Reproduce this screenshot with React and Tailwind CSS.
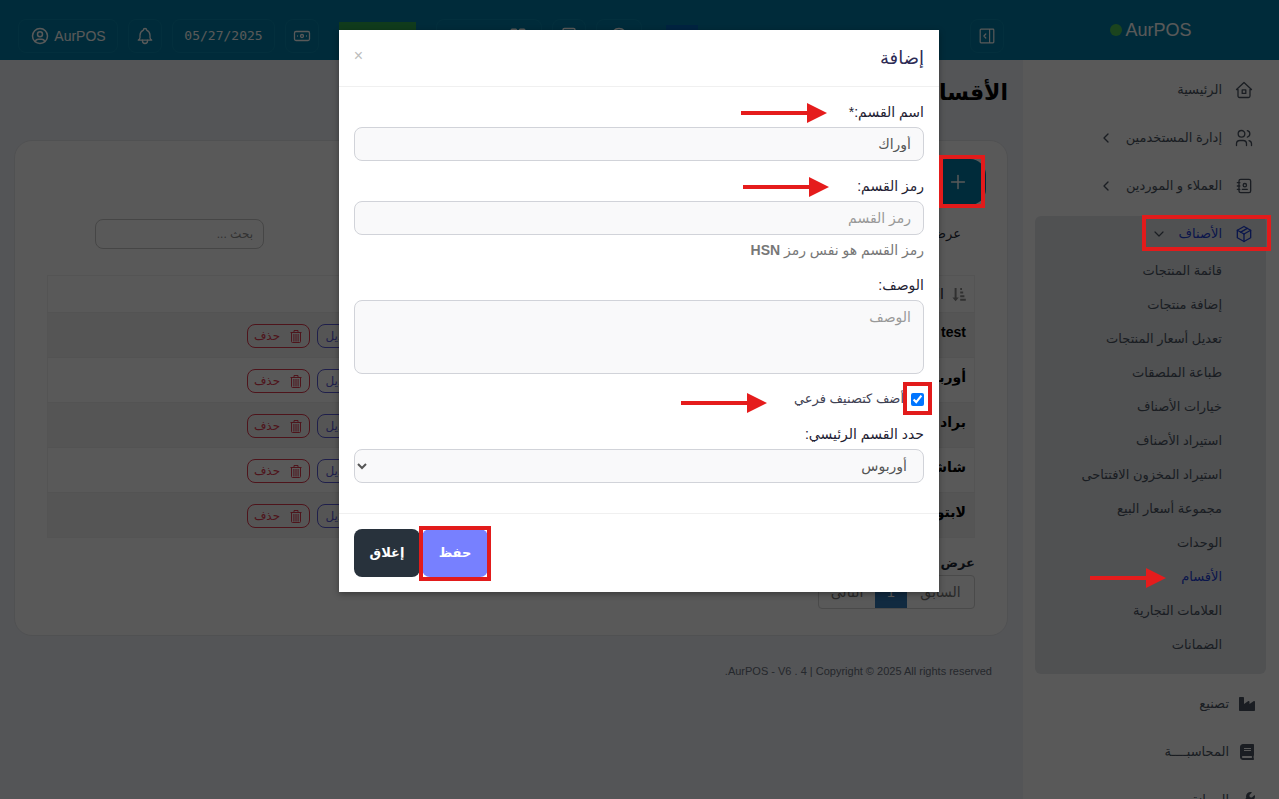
import {
  TbUsers,
  TbAddressBook,
  TbPackage,
  TbUserCircle,
  TbBell,
} from "react-icons/tb";
import { FaIndustry, FaBook, FaWrench } from "react-icons/fa";
import { Banknote, ChevronDown, ChevronLeft, LayoutGrid, Calculator, Clock, Plus } from "lucide-react";

const subItems = [
  "قائمة المنتجات",
  "إضافة منتجات",
  "تعديل أسعار المنتجات",
  "طباعة الملصقات",
  "خيارات الأصناف",
  "استيراد الأصناف",
  "استيراد المخزون الافتتاحى",
  "مجموعة أسعار البيع",
  "الوحدات",
  "الأقسام",
  "العلامات التجارية",
  "الضمانات",
];

const categories = ["test", "أوربوس", "براد", "شاشات", "لابتوب"];

function HomeIcon() {
  return (
    <svg viewBox="0 0 20 20" className="size-5" fill="none" stroke="currentColor" strokeWidth="1.3" strokeLinejoin="round" strokeLinecap="round">
      <path d="M4 9.5H2.5L10 2.5l7.5 7H16V16a1.5 1.5 0 0 1-1.5 1.5h-9A1.5 1.5 0 0 1 4 16z" />
      <path d="M8.2 9.8h3.6v3.6H8.2z" />
    </svg>
  );
}

function PanelIcon() {
  return (
    <svg viewBox="0 0 16 16" className="size-4" fill="none" stroke="currentColor" strokeWidth="1.2" strokeLinejoin="round" strokeLinecap="round">
      <path d="M2 1.2h12a.8.8 0 0 1 .8.8v12a.8.8 0 0 1-.8.8H2a.8.8 0 0 1-.8-.8V2a.8.8 0 0 1 .8-.8zM10.6 1.2v13.6M6.8 6 4.9 8l1.9 2" />
    </svg>
  );
}

function SortIcon() {
  return (
    <svg viewBox="0 0 14 15" className="h-[15px] w-3.5 text-[#8b8b8b]" fill="currentColor">
      <path d="M2.6 1h2v9.5h2.2l-3.2 3.8-3.2-3.8h2.2zM8.2 1h1.8v2H8.2zM8.2 4.6h3v2h-3zM8.2 8.2h4.2v2H8.2zM8.2 11.8h5.6v2H8.2z" />
    </svg>
  );
}

function TrashIcon() {
  return (
    <svg viewBox="0 0 12 14" className="h-[14px] w-3" fill="none" stroke="currentColor">
      <path d="M0.5 3.5h11M4 3V1.5h4V3M1.5 3.5v9q0 1 1 1h7q1 0 1-1v-9M3.9 5v7.5M6 5v7.5M8.1 5v7.5" />
    </svg>
  );
}

function Arrow({ short, className }) {
  return (
    <svg
      viewBox={short ? "10 0 76 20" : "0 0 86 20"}
      className={`absolute h-5 ${short ? "w-[76px]" : "w-[86px]"} ${className}`}
      fill="#e51c1c"
      aria-hidden="true"
    >
      <path d={short ? "M10 8h56V0l20 10-20 10v-8H10z" : "M0 8h66V0l20 10-20 10v-8H0z"} />
    </svg>
  );
}

function Frame({ className }) {
  return <span className={`pointer-events-none absolute border-4 border-[#e21b1b] ${className}`} />;
}

function NavItem({ icon, label, chevron }) {
  return (
    <a href="#" className="flex h-12 items-center pr-[25px] text-[#4b5563]">
      <span className="flex w-5 justify-center">{icon}</span>
      <span className="mr-3">{label}</span>
      {chevron && <ChevronLeft className="mr-3 size-4" strokeWidth={2} />}
    </a>
  );
}

function FaNav({ icon, label }) {
  return (
    <a href="#" className="flex h-12 items-center pr-6 text-[#4b5563]">
      <span className="text-base">{icon}</span>
      <span className="mr-2.5">{label}</span>
    </a>
  );
}

function Sidebar() {
  return (
    <aside className="w-64 shrink-0 bg-white pt-1.5 text-[13px]">
      <nav>
        <NavItem icon={<HomeIcon />} label="الرئيسية" />
        <NavItem icon={<TbUsers className="size-5" strokeWidth={1.6} />} label="إدارة المستخدمين" chevron />
        <NavItem icon={<TbAddressBook className="size-5" strokeWidth={1.6} />} label="العملاء و الموردين" chevron />
        <div className="mt-1.5 mr-[13px] ml-3 rounded-md bg-[#e5e7eb] pb-3">
          <a href="#" className="flex h-[38px] items-center pr-3 pb-0.5 text-[#1d3fd8]">
            <TbPackage className="size-5" strokeWidth={1.6} />
            <span className="mr-3">الأصناف</span>
            <ChevronDown className="mr-3 size-4 text-[#4b5563]" strokeWidth={1.8} />
          </a>
          {subItems.map((item) => (
            <a
              key={item}
              href="#"
              className={`flex h-[34px] items-center pr-11 ${item === "الأقسام" ? "text-[#1d3fd8]" : "text-[#4b5563]"}`}
            >
              {item}
            </a>
          ))}
        </div>
        <div className="mt-1.5">
          <FaNav icon={<FaIndustry />} label="تصنيع" />
          <FaNav icon={<FaBook />} label="المحاسبــــة" />
          <FaNav icon={<FaWrench />} label="الصيانة" />
        </div>
      </nav>
    </aside>
  );
}

function HeaderButton({ label, className = "", children }) {
  return (
    <button
      type="button"
      aria-label={label}
      className={`flex h-[34px] items-center justify-center rounded-lg border border-[#0a86ae] ${className}`}
    >
      {children}
    </button>
  );
}

function Header() {
  return (
    <header className="flex h-[60px] bg-[#007da5] text-white">
      <div className="flex w-64 shrink-0 items-center justify-center text-lg">
        <span>AurPOS</span>
        <span className="mr-[3px] size-3 rounded-full bg-[#4fc456]" />
      </div>
      <div className="flex flex-1 items-center justify-between pt-3 pr-[19px] pl-[18px]">
        <HeaderButton label="طي القائمة" className="w-[34px]">
          <PanelIcon />
        </HeaderButton>
        <div className="flex items-center gap-2.5">
          <span className="ml-3.5 h-[22px] w-8 bg-[#0064b8]" />
          <HeaderButton label="الوقت" className="w-[46px]">
            <Clock className="size-[18px]" />
          </HeaderButton>
          <HeaderButton label="الحاسبة" className="w-[34px]">
            <Calculator className="size-[18px]" />
          </HeaderButton>
          <HeaderButton label="نقطة بيع" className="ml-2.5 w-[106px] gap-2 text-sm">
            <LayoutGrid className="size-[18px]" />
            نقطة بيع
          </HeaderButton>
          <button type="button" className="ml-2.5 h-7 w-[77px] bg-[#30a852] text-sm">
            إضافة
          </button>
          <HeaderButton label="النقدية" className="w-[34px]">
            <Banknote className="size-[18px]" strokeWidth={1.7} />
          </HeaderButton>
          <HeaderButton label="التاريخ" className="w-[103px] font-['DejaVu_Sans_Mono',monospace] text-[13px]">
            05/27/2025
          </HeaderButton>
          <HeaderButton label="الإشعارات" className="w-[34px]">
            <TbBell className="size-5" strokeWidth={1.6} />
          </HeaderButton>
          <HeaderButton label="الحساب" className="w-[100px] gap-1 text-sm">
            <span>AurPOS</span>
            <TbUserCircle className="size-5" strokeWidth={1.8} />
          </HeaderButton>
        </div>
      </div>
    </header>
  );
}

function CategoryTable() {
  return (
    <table className="mt-[26px] w-full table-fixed border-collapse border border-[#f0f0f0] text-sm text-[#1f2937]">
      <thead>
        <tr className="h-[37px]">
          <th className="w-[24%] px-2 text-right font-medium">
            <span className="flex items-center gap-2">
              <SortIcon />
              القسم
            </span>
          </th>
          <th className="w-[18%] px-2 text-right font-medium">رمز القسم</th>
          <th className="px-2 text-right font-medium">الوصف</th>
          <th className="w-[342px] px-2 text-right font-medium">خيار</th>
        </tr>
      </thead>
      <tbody>
        {categories.map((name) => (
          <tr key={name} className="h-[45px] border-t border-[#eeeeee] odd:bg-[#f3f3f3]">
            <td className="px-2 pt-[9px] align-top font-bold text-black">{name}</td>
            <td />
            <td />
            <td className="pt-0.5 pr-0">
              <div className="flex gap-[7px] text-xs">
                <button type="button" className="flex h-6 w-[73px] items-center justify-end rounded-lg border border-[#5b5bd6] pl-2 text-[#5b5bd6]">
                  تعديل
                </button>
                <button
                  type="button"
                  className="flex h-6 w-[63px] items-center justify-center gap-2.5 rounded-lg border border-[#e0394f] text-[#e0394f]"
                >
                  <TrashIcon />
                  حذف
                </button>
              </div>
            </td>
          </tr>
        ))}
      </tbody>
    </table>
  );
}

function Content() {
  return (
    <main className="flex-1 pt-4 pr-[15px] pl-3.5">
      <h1 className="text-[22px] leading-[34px] font-bold text-black">الأقسام</h1>
      <section className="mt-[30px] rounded-[18px] border border-[#e5e7eb] bg-white px-8 pt-[18px] pb-[26px]">
        <button
          type="button"
          aria-label="إضافة"
          className="-mr-[11px] flex h-[46px] w-14 items-center justify-center rounded-2xl bg-[#007da5] text-white"
        >
          <Plus className="size-[22px]" strokeWidth={1.6} />
        </button>
        <div className="mt-3.5 flex items-center justify-between pr-3.5 pl-12">
          <label className="text-[13px] text-[#1f2937]">
            عرض <select className="rounded border border-[#d1d5db] px-2"><option>25</option></select>
          </label>
          <input
            type="search"
            aria-label="بحث"
            placeholder="بحث ..."
            className="h-[30px] w-[169px] rounded-lg border border-[#c8c8c8] px-2.5 text-xs placeholder:text-[#8f8f8f]"
          />
        </div>
        <CategoryTable />
        <p className="mt-[15px] text-[13px] leading-5 font-bold text-[#1f2937]">عرض 1 إلى 5 من 5</p>
        <div className="mt-0.5 flex h-[34px] w-[157px] overflow-hidden rounded border border-[#d4d4d4] text-sm text-[#777777]">
          <button type="button" className="w-[67px]">السابق</button>
          <button type="button" className="w-8 bg-[#337ab7] text-white">1</button>
          <button type="button" className="flex-1">التالى</button>
        </div>
      </section>
      <footer className="mt-[27px] pr-4 text-[11px] leading-4 text-[#6b7280]">
        AurPOS - V6 . 4 | Copyright © 2025 All rights reserved.
      </footer>
    </main>
  );
}

const fieldClass =
  "block h-[34px] w-full rounded-lg border border-[#d1d3d9] bg-[#f9f9fa] px-3 text-[#555555] placeholder:text-[#999999]";

function CategoryModal() {
  return (
    <form className="relative w-[600px] max-w-full bg-white text-sm leading-5 text-[#1f2233] shadow-[0_2px_6px_rgba(0,0,0,0.35)]">
      <div className="flex h-[57px] items-center justify-between border-b border-[#f0f0f0] px-[15px]">
        <h2 className="text-lg font-medium text-[#2d2b55]">إضافة</h2>
        <button type="button" aria-label="إغلاق النافذة" className="w-[9px] pb-1 text-base text-[#bdbdbd]">
          ×
        </button>
      </div>

      <div className="flex flex-col gap-[15px] p-[15px] pb-[30px]">
        <div className="relative">
          <label htmlFor="name" className="mb-[5px] block">اسم القسم:*</label>
          <input id="name" type="text" defaultValue="أوراك" className={fieldClass} />
          <Arrow className="top-px right-[97px]" />
        </div>

        <div className="relative">
          <label htmlFor="code" className="mb-[5px] block">رمز القسم:</label>
          <input id="code" type="text" placeholder="رمز القسم" className={fieldClass} />
          <p className="mt-[5px] text-[#777777]">
            رمز القسم هو نفس رمز <b>HSN</b>
          </p>
          <Arrow className="top-px right-[95px]" />
        </div>

        <div>
          <label htmlFor="description" className="mb-[5px] block">الوصف:</label>
          <textarea
            id="description"
            placeholder="الوصف"
            className="block h-[74px] w-full resize-none rounded-lg border border-[#d1d3d9] bg-[#f9f9fa] px-3 py-1.5 placeholder:text-[#999999]"
          />
        </div>

        <div className="relative flex h-5 items-center">
          <input id="sub" type="checkbox" defaultChecked className="size-[13px]" />
          <label htmlFor="sub" className="mr-[7px] text-[13px] text-[#3f4254]">أضف كتصنيف فرعي</label>
          <Frame className="-top-[7px] -right-2 h-[33px] w-[29px]" />
          <Arrow className="top-1 right-[157px]" />
        </div>

        <div>
          <label htmlFor="parent" className="mb-[5px] block">حدد القسم الرئيسي:</label>
          <select id="parent" className={fieldClass}>
            <option>أوربوس</option>
          </select>
        </div>
      </div>

      <div className="flex justify-end gap-0.5 border-t border-[#f0f0f0] p-[15px] text-[13px] font-bold text-white">
        <div className="relative">
          <button type="submit" className="h-12 w-[66px] rounded-lg bg-[#7780ff]">حفظ</button>
          <Frame className="-top-[3px] -left-[3px] h-[55px] w-[72px]" />
        </div>
        <button type="button" className="h-12 w-[66px] rounded-lg bg-[#28323c]">إغلاق</button>
      </div>
    </form>
  );
}

export default function App() {
  return (
    <div dir="rtl" className="relative h-screen overflow-hidden bg-[#f0f3f8] font-['Liberation_Sans','DejaVu_Sans',sans-serif]">
      <Header />
      <div className="flex min-h-full">
        <Sidebar />
        <Content />
      </div>
      <div className="absolute inset-0 flex items-start justify-center bg-black/65 pt-[30px] pr-px">
        <CategoryModal />
      </div>
      <Frame className="top-[155px] right-[294px] h-[53px] w-[46px]" />
      <Frame className="top-[215px] right-2 h-9 w-[129px]" />
      <Arrow short className="top-[568px] right-[113px]" />
    </div>
  );
}
